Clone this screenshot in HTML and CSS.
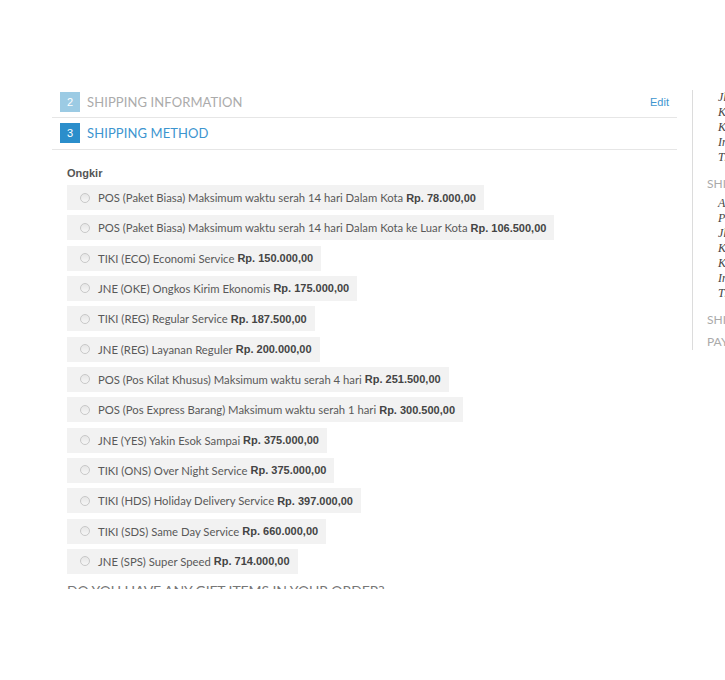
FILE: index.html
```html
<!DOCTYPE html>
<html>
<head>
<meta charset="utf-8">
<link rel="stylesheet" href="styles.css">
</head>
<body>
<div class="page">
  <div class="layout">
    <div class="main">
      <div class="step done">
        <span class="badge light">2</span>
        <span class="step-title">SHIPPING INFORMATION</span>
        <a class="edit">Edit</a>
      </div>
      <div class="step active">
        <span class="badge dark">3</span>
        <span class="step-title">SHIPPING METHOD</span>
      </div>
      <div class="methods">
        <div class="group-label">Ongkir</div>
        <ul class="options">
          <li><span class="radio"></span><span class="name">POS (Paket Biasa) Maksimum waktu serah 14 hari Dalam Kota</span><b class="price">Rp. 78.000,00</b></li>
          <li><span class="radio"></span><span class="name">POS (Paket Biasa) Maksimum waktu serah 14 hari Dalam Kota ke Luar Kota</span><b class="price">Rp. 106.500,00</b></li>
          <li><span class="radio"></span><span class="name">TIKI (ECO) Economi Service</span><b class="price">Rp. 150.000,00</b></li>
          <li><span class="radio"></span><span class="name">JNE (OKE) Ongkos Kirim Ekonomis</span><b class="price">Rp. 175.000,00</b></li>
          <li><span class="radio"></span><span class="name">TIKI (REG) Regular Service</span><b class="price">Rp. 187.500,00</b></li>
          <li><span class="radio"></span><span class="name">JNE (REG) Layanan Reguler</span><b class="price">Rp. 200.000,00</b></li>
          <li><span class="radio"></span><span class="name">POS (Pos Kilat Khusus) Maksimum waktu serah 4 hari</span><b class="price">Rp. 251.500,00</b></li>
          <li><span class="radio"></span><span class="name">POS (Pos Express Barang) Maksimum waktu serah 1 hari</span><b class="price">Rp. 300.500,00</b></li>
          <li><span class="radio"></span><span class="name">JNE (YES) Yakin Esok Sampai</span><b class="price">Rp. 375.000,00</b></li>
          <li><span class="radio"></span><span class="name">TIKI (ONS) Over Night Service</span><b class="price">Rp. 375.000,00</b></li>
          <li><span class="radio"></span><span class="name">TIKI (HDS) Holiday Delivery Service</span><b class="price">Rp. 397.000,00</b></li>
          <li><span class="radio"></span><span class="name">TIKI (SDS) Same Day Service</span><b class="price">Rp. 660.000,00</b></li>
          <li><span class="radio"></span><span class="name">JNE (SPS) Super Speed</span><b class="price">Rp. 714.000,00</b></li>
        </ul>
        <h3 class="gift">DO YOU HAVE ANY GIFT ITEMS IN YOUR ORDER?</h3>
      </div>
    </div>
    <div class="side">
      <ul class="addr">
        <li>Jl. Sudirman</li>
        <li>Kebayoran</li>
        <li>Kota Jakarta</li>
        <li>Indonesia</li>
        <li>T: 0812</li>
      </ul>
      <div class="side-title">SHIPPING ADDRESS</div>
      <ul class="addr">
        <li>Andi</li>
        <li>PT Maju</li>
        <li>Jl. Sudirman</li>
        <li>Kebayoran</li>
        <li>Kota Jakarta</li>
        <li>Indonesia</li>
        <li>T: 0812</li>
      </ul>
      <div class="side-title">SHIPPING METHOD</div>
      <div class="side-title">PAYMENT METHOD</div>
    </div>
  </div>
</div>
</body>
</html>
```
FILE: styles.css
```css
html, body {
  margin: 0;
  padding: 0;
  background: #fff;
  overflow: hidden;
}
.page {
  height: 589px;
  overflow: hidden;
  width: 725px;
}
.layout {
  display: flex;
  align-items: flex-start;
  padding-top: 87px;
  padding-left: 52px;
}
.main {
  width: 625px;
  flex: none;
  font-family: Lato, "Open Sans", sans-serif;
}
.step {
  display: flex;
  align-items: center;
  padding: 5px 8px 5px 8px;
  border-bottom: 1px solid #e6e6e6;
  height: 20px;
}
.step.active {
  padding-top: 5px;
  padding-bottom: 6px;
}
.badge {
  width: 20px;
  height: 20px;
  display: flex;
  align-items: center;
  justify-content: center;
  color: #fff;
  font-family: "Liberation Sans", sans-serif;
  font-size: 11px;
  margin-right: 7px;
}
.badge.light { background: #9ccbe4; }
.badge.dark { background: #2b8ecb; }
.step-title {
  font-size: 13px;
  letter-spacing: 0.1px;
  color: #ababab;
  margin-top: -1px;
}
.step.active .step-title { color: #3d95cf; }
.edit {
  margin-left: auto;
  font-family: "Liberation Sans", sans-serif;
  font-size: 11px;
  color: #3d95cf;
}
.methods {
  padding: 17px 0 0 15px;
}
.group-label {
  font-family: "Liberation Sans", sans-serif;
  font-weight: bold;
  font-size: 11px;
  color: #555;
  margin-bottom: 6px;
}
.options {
  list-style: none;
  margin: 0;
  padding: 0;
  display: flex;
  flex-direction: column;
  align-items: flex-start;
  gap: 5.33px;
}
.options li {
  display: flex;
  align-items: center;
  height: 25px;
  background: #f2f2f2;
  padding: 0 8px 0 13px;
  font-size: 11.3px;
  color: #595959;
  white-space: pre;
}
.radio {
  width: 8px;
  height: 8px;
  border-radius: 50%;
  border: 1px solid #c8c8c8;
  background: linear-gradient(#e6e6e6, #f6f6f6);
  margin-right: 8px;
  flex: none;
}
.name {
  margin-right: 3px;
}
.price {
  font-family: "Liberation Sans", sans-serif;
  font-weight: bold;
  font-size: 11px;
  color: #444;
}
.gift {
  margin: 8px 0 0 0;
  font-weight: normal;
  font-size: 14px;
  letter-spacing: -0.1px;
  color: #777;
  line-height: 18px;
}
.side {
  margin-left: 15px;
  margin-top: 3px;
  border-left: 1px solid #dcdcdc;
  padding-left: 14px;
  height: 260px;
  flex: none;
  width: 100px;
  white-space: nowrap;
}
.addr {
  list-style: none;
  margin: 0;
  padding: 0;
  font-family: "Liberation Serif", serif;
  font-style: italic;
  font-size: 12px;
  line-height: 15px;
  color: #444;
}
.addr li { padding-left: 11px; }
.side-title {
  font-family: Lato, sans-serif;
  font-size: 12px;
  color: #aaa;
  margin-top: 11px;
  margin-bottom: 5px;
  line-height: 15px;
}
.side-title + .side-title { margin-top: 7px; }
```
